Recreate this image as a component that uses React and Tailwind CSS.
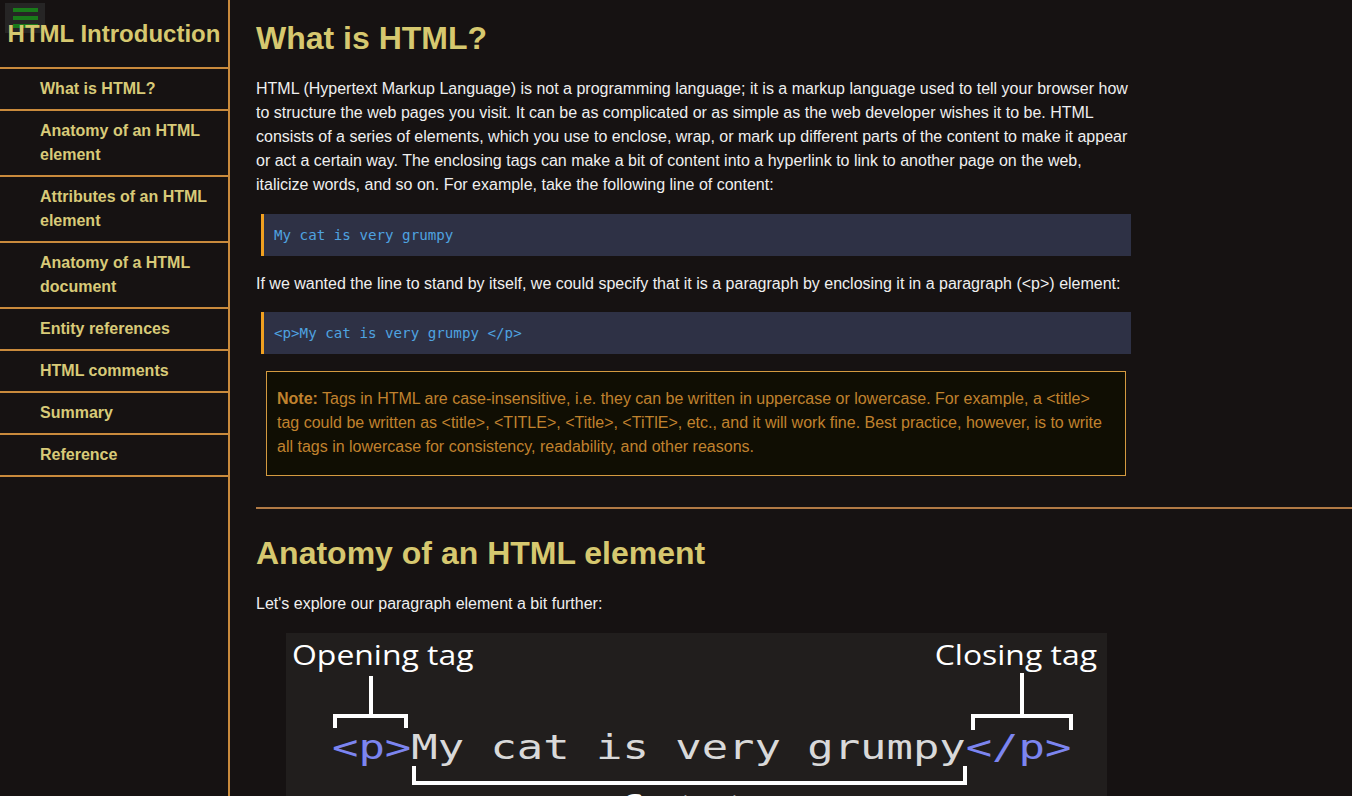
import React from 'react'

const navItems = [
  'What is HTML?',
  'Anatomy of an HTML element',
  'Attributes of an HTML element',
  'Anatomy of a HTML document',
  'Entity references',
  'HTML comments',
  'Summary',
  'Reference',
]

const Sidebar = () => (
  <aside className="relative w-[230px] shrink-0 border-r-2 border-[#c98a3c] min-h-screen">
    <button className="absolute left-[5px] top-[3px] z-10 flex h-[30px] w-[40px] flex-col items-center justify-center gap-[4px] bg-[#2a2a2a]/80">
      <span className="block h-[4px] w-[25px] bg-[#197a1a]"></span>
      <span className="block h-[4px] w-[25px] bg-[#197a1a]"></span>
      <span className="block h-[4px] w-[25px] bg-[#197a1a]"></span>
    </button>
    <div className="relative z-20 flex h-[69px] items-center justify-center border-b-2 border-[#c98a3c]">
      <h2 className="text-[24px] font-bold leading-[28px] text-[#d6c86f]">HTML Introduction</h2>
    </div>
    <ul>
      {navItems.map((x, i) => (
        <li key={i} className="border-b-2 border-[#c98a3c]">
          <a className="block py-2 pl-[40px] pr-4 text-[16px] font-bold leading-[24px] text-[#d8ca78]">
            {x}
          </a>
        </li>
      ))}
    </ul>
  </aside>
)

const CodeBlock = ({ children }) => (
  <pre className="mx-[5px] border-l-[3px] border-[#f0a020] bg-[#2e3145] py-[10px] pl-[10px] font-['DejaVu_Sans_Mono',monospace] text-[14.2px] leading-[22px] text-[#4fa3e0]">
    {children}
  </pre>
)

// diagram of the paragraph element, same as the picture in the original page
const AnatomyDiagram = () => (
  <div className="mx-auto mt-[17px] h-[200px] w-[821px] bg-[#211e1d]">
    <svg width="821" height="200" viewBox="0 0 821 200">
      <g fill="none" stroke="#ffffff" strokeWidth="4">
        <polyline points="49,95 49,83 120,83 120,95" />
        <line x1="85" y1="43" x2="85" y2="83" />
        <polyline points="687,97 687,83 785,83 785,97" />
        <line x1="736" y1="40" x2="736" y2="83" />
        <polyline points="128,133 128,150 679,150 679,133" />
      </g>
      <g fontFamily="'Open Sans', sans-serif" fontSize="28" fill="#ffffff" transform="scale(1.14,1)">
        <text x="5.3" y="32">Opening tag</text>
        <text x="711.4" y="32" textAnchor="end">Closing tag</text>
        <text x="294.7" y="181">Content</text>
      </g>
      <text
        x="35.7"
        y="126"
        fontFamily="'DejaVu Sans Mono', monospace"
        fontSize="34"
        transform="scale(1.29,1)"
      >
        <tspan fill="#7c85f0">&lt;p&gt;</tspan>
        <tspan fill="#d9d9d9">My cat is very grumpy</tspan>
        <tspan fill="#7c85f0">&lt;/p&gt;</tspan>
      </text>
    </svg>
  </div>
)

export default function App() {
  return (
    <div className="flex min-h-screen bg-[#161212] font-['Liberation_Sans',Arial,sans-serif]">
      <Sidebar />
      <main className="flex-1 pl-[26px]">
        <div className="max-w-[880px]">
          <h1 className="mt-[20px] mb-[21px] text-[32px] font-bold leading-[36px] text-[#d6c86f]">What is HTML?</h1>
          <p className="text-[16px] leading-[24px] text-[#efefef]">
            HTML (Hypertext Markup Language) is not a programming language; it is a markup language used to tell your browser how to structure the web pages you visit. It can be as complicated or as simple as the web developer wishes it to be. HTML consists of a series of elements, which you use to enclose, wrap, or mark up different parts of the content to make it appear or act a certain way. The enclosing tags can make a bit of content into a hyperlink to link to another page on the web, italicize words, and so on. For example, take the following line of content:
          </p>
          <div className="mt-[17px]">
            <CodeBlock>My cat is very grumpy</CodeBlock>
          </div>
          <p className="mt-[16px] text-[16px] leading-[24px] text-[#efefef]">
            If we wanted the line to stand by itself, we could specify that it is a paragraph by enclosing it in a paragraph (&lt;p&gt;) element:
          </p>
          <div className="mt-[16px]">
            <CodeBlock>&lt;p&gt;My cat is very grumpy &lt;/p&gt;</CodeBlock>
          </div>
          <div className="mt-[17px] ml-[10px] mr-[10px] border border-[#d49a40] bg-[#100e03] px-[10px] pt-[15px] pb-[16px] text-[16px] leading-[24px] text-[#c0822e]">
            <b>Note:</b> Tags in HTML are case-insensitive, i.e. they can be written in uppercase or lowercase. For example, a &lt;title&gt; tag could be written as &lt;title&gt;, &lt;TITLE&gt;, &lt;Title&gt;, &lt;TiTlE&gt;, etc., and it will work fine. Best practice, however, is to write all tags in lowercase for consistency, readability, and other reasons.
          </div>
        </div>
        <hr className="mt-[31px] border-t-2 border-[#b17a45]" />
        <div className="max-w-[880px]">
          <h1 className="mt-[26px] text-[32px] font-bold leading-[36px] text-[#d6c86f]">Anatomy of an HTML element</h1>
          <p className="mt-[21px] text-[16px] leading-[24px] text-[#efefef]">Let's explore our paragraph element a bit further:</p>
          <AnatomyDiagram />
        </div>
      </main>
    </div>
  )
}
